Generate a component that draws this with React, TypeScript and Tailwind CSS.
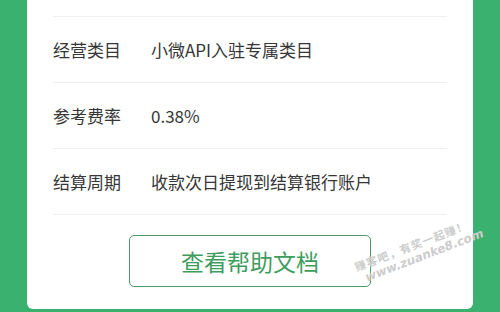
// App.tsx
// Cartão de informações do comerciante (经营类目 / 费率 / 结算周期) com botão de ajuda.

import React from 'react'

interface InfoRow {
    label: string
    value: string
}

const rows: InfoRow[] = [
    { label: '经营类目', value: '小微API入驻专属类目' },
    { label: '参考费率', value: '0.38%' },
    { label: '结算周期', value: '收款次日提现到结算银行账户' },
]

const font = { fontFamily: '"Noto Sans CJK SC", "Noto Sans", sans-serif' }

export default function App() {
    return (
        <div
            className="w-[500px] h-[312px] bg-[#3bb16f] px-[27px] pb-[3px] flex overflow-hidden"
            style={font}
        >
            <div className="relative flex-1 bg-white rounded-b-[6px] pt-[16px] px-[26px]">
                {/* Linhas de informação */}
                {rows.map(row => (
                    <div
                        key={row.label}
                        className="h-[66px] border-t border-[#efefef] flex items-center text-[17px] text-[#363636]"
                    >
                        <span className="w-[98px] shrink-0">{row.label}</span>
                        <span>{row.value}</span>
                    </div>
                ))}
                <div className="border-t border-[#efefef]" />

                {/* Botão */}
                <div className="flex justify-center pt-[20px]">
                    <button
                        type="button"
                        className="w-[242px] h-[52px] border border-[#4b9d66] rounded-[5px] text-[23px] text-[#3e9c5e] flex items-center justify-center"
                    >
                        查看帮助文档
                    </button>
                </div>

                {/* Marca d'água */}
                <div className="absolute left-[324px] top-[262px] -rotate-[21deg] origin-top-left text-[#cccccc] font-bold pointer-events-none whitespace-nowrap">
                    <div className="text-[11px] leading-[13px] tracking-[1px] pl-[2px]">赚客吧，有奖一起赚！</div>
                    <div className="text-[12px] leading-[14px] italic pl-[8px]" style={{ fontFamily: '"DejaVu Sans", sans-serif' }}>
                        www.zuanke8.com
                    </div>
                </div>
            </div>
        </div>
    )
}
